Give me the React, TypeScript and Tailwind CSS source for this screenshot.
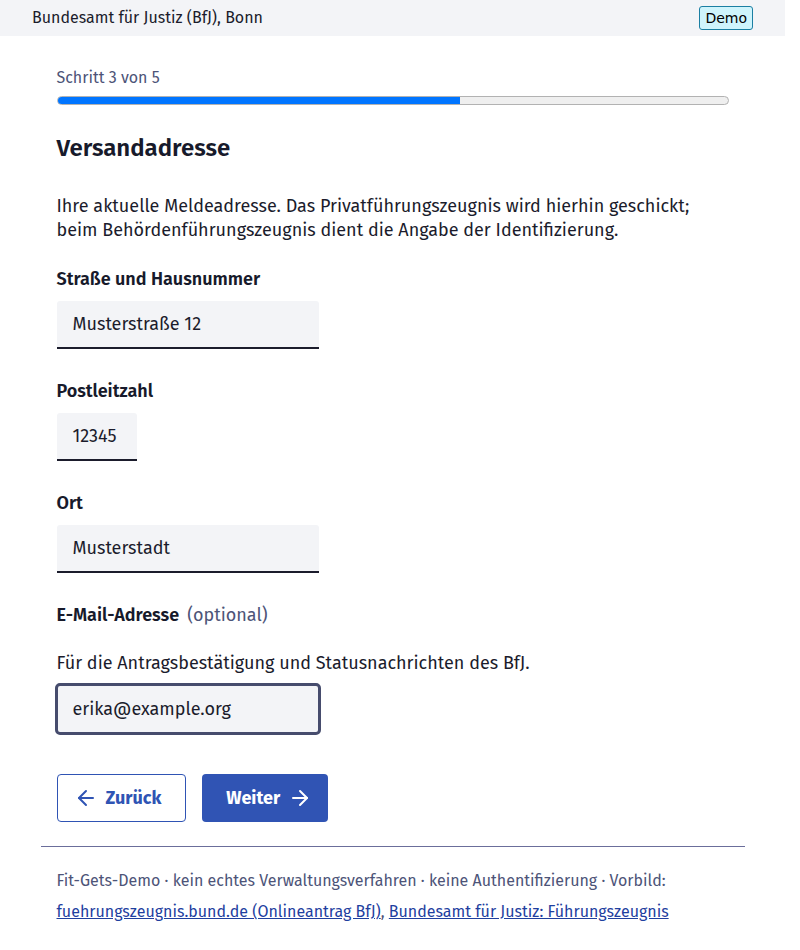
import { ArrowLeft, ArrowRight } from "lucide-react";

const font = { fontFamily: '"Fira Sans", "Open Sans", "Noto Sans", sans-serif' };

const fields = [
  { label: "Straße und Hausnummer", value: "Musterstraße 12", width: "w-[262px]" },
  { label: "Postleitzahl", value: "12345", width: "w-[80px]" },
  { label: "Ort", value: "Musterstadt", width: "w-[262px]" },
];

export default function App() {
  return (
    <div className="min-h-[1000px] w-[785px] bg-white text-[#1b1c2c]" style={font}>
      {/* top bar */}
      <header className="flex h-9 items-center justify-between bg-[#f3f4f7] px-8">
        <span className="text-[16px] text-[#1b1c2c]">Bundesamt für Justiz (BfJ), Bonn</span>
        <span className="flex h-6 items-center rounded-[3px] border border-[#1b7fa3] bg-[#cff4fc] px-[5px] text-[14px] text-black font-['DejaVu_Sans',sans-serif]">
          Demo
        </span>
      </header>

      <div className="mx-auto max-w-[704px]">
        <main className="px-4 pt-[30px]">
          <p className="text-[16px] leading-6 text-[#4d5478]">Schritt 3 von 5</p>
          <div className="mt-[6px] h-[9px] w-full overflow-hidden rounded-full border border-[#b2b2b2] bg-[#efefef]">
            <div className="h-full w-[60%] bg-[#0075ff]" />
          </div>

          <h1 className="mt-[27px] text-[24px] font-semibold leading-8 text-[#171a2b]">Versandadresse</h1>

          <p className="mt-[30px] text-[18px] leading-6">
            Ihre aktuelle Meldeadresse. Das Privatführungszeugnis wird hierhin geschickt; beim Behördenführungszeugnis dient die Angabe der Identifizierung.
          </p>

          {fields.map((f, i) => (
            <div key={f.label} className={i === 0 ? "mt-[25px]" : "mt-[30px]"}>
              <label className="block text-[18px] font-semibold leading-6 text-[#171a2b]">{f.label}</label>
              <div
                className={`mt-[10px] flex h-12 items-center rounded-t-[3px] border-b-2 border-[#1b1c2c] bg-[#f3f4f7] px-4 text-[18px] ${f.width}`}
              >
                {f.value}
              </div>
            </div>
          ))}

          <div className="mt-[30px]">
            <p className="text-[18px] leading-6">
              <span className="font-semibold text-[#171a2b]">E-Mail-Adresse</span>
              <span className="ml-2 text-[#4d5478]">(optional)</span>
            </p>
            <p className="mt-[24px] text-[18px] leading-6">
              Für die Antragsbestätigung und Statusnachrichten des BfJ.
            </p>
            <div className="-ml-[2px] mt-[8px] flex h-[52px] w-[266px] items-center rounded-[5px] border-[3px] border-[#464c6d] bg-[#f3f4f7] px-[15px] text-[18px]">
              erika@example.org
            </div>
          </div>

          <div className="mt-[39px] flex gap-4">
            <button className="flex h-12 items-center gap-2 rounded-[4px] border border-[#2f54b4] bg-white pl-4 pr-6 text-[18px] font-bold text-[#2f54b4]">
              <ArrowLeft size={24} strokeWidth={2} />
              Zurück
            </button>
            <button className="flex h-12 items-center gap-2 rounded-[4px] bg-[#3054b4] pl-6 pr-4 text-[18px] font-bold text-white">
              Weiter
              <ArrowRight size={24} strokeWidth={2} />
            </button>
          </div>
        </main>

        <footer className="mt-6 border-t border-[#6b6e9b] px-4 pt-[18px] pb-12 text-[16px] leading-[31px] text-[#4d5478]">
          <p>Fit-Gets-Demo · kein echtes Verwaltungsverfahren · keine Authentifizierung · Vorbild:</p>
          <p>
            <a href="#" className="text-[#1f3f9f] underline">fuehrungszeugnis.bund.de (Onlineantrag BfJ)</a>
            <span>, </span>
            <a href="#" className="text-[#1f3f9f] underline">Bundesamt für Justiz: Führungszeugnis</a>
          </p>
        </footer>
      </div>
    </div>
  );
}
